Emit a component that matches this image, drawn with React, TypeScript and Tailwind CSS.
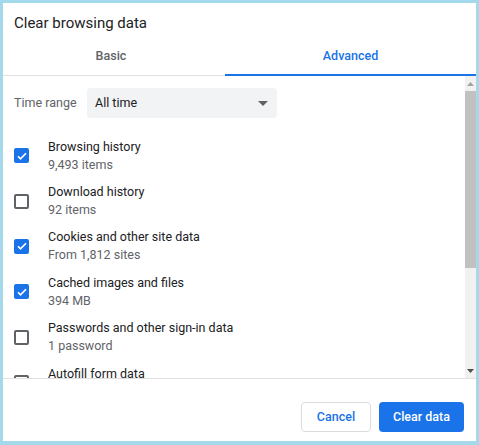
import React from "react";

const items = [
  { title: "Browsing history", sub: "9,493 items", checked: true },
  { title: "Download history", sub: "92 items", checked: false },
  { title: "Cookies and other site data", sub: "From 1,812 sites", checked: true },
  { title: "Cached images and files", sub: "394 MB", checked: true },
  { title: "Passwords and other sign-in data", sub: "1 password", checked: false },
  { title: "Autofill form data", sub: "", checked: false },
];

function Checkbox({ checked }: { checked: boolean }) {
  if (checked) {
    return (
      <div className="w-[15px] h-[15px] rounded-[2px] bg-[#1a73e8] flex items-center justify-center shrink-0">
        <svg width="12" height="12" viewBox="0 0 24 24">
          <path d="M4 12.5l5 5L20 6.5" fill="none" stroke="#fff" strokeWidth="3.4" />
        </svg>
      </div>
    );
  }
  return <div className="w-[15px] h-[15px] rounded-[2px] border-2 border-[#5f6368] shrink-0" />;
}

export default function App() {
  return (
    <div
      className="w-[479px] h-[445px] bg-[#a3d9ea] pt-[3px] pl-[3px] pr-[3px] pb-[4px]"
      style={{ fontFamily: "Roboto, 'Liberation Sans', sans-serif" }}
    >
      <div className="bg-white h-full flex flex-col">
        <div className="h-[35px] pt-[10px] pl-[11px] text-[15px] leading-[20px] text-[#202124]">
          Clear browsing data
        </div>
        <div className="flex h-[38px] border-b border-[#e0e0e0] text-[12.5px] font-medium">
          <div className="w-[222px] flex items-center justify-center text-[#5f6368] pr-[6px]">Basic</div>
          <div className="flex-1 flex items-center justify-center text-[#1a73e8] border-b-2 border-[#1a73e8] -mb-px">
            Advanced
          </div>
        </div>
        <div className="flex h-[303px] border-b border-[#e0e0e0]">
          <div className="flex-1 overflow-hidden pl-[11px]">
            <div className="flex items-center mt-[12px] h-[30px]">
              <span className="text-[12.5px] text-[#5f6368] w-[73px]">Time range</span>
              <div className="w-[190px] h-[30px] rounded-[4px] bg-[#f1f3f4] flex items-center justify-between pl-[8px] pr-[9px]">
                <span className="text-[12.5px] text-[#202124]">All time</span>
                <svg width="10" height="5" viewBox="0 0 10 5">
                  <path d="M0 0h10L5 5z" fill="#5f6368" />
                </svg>
              </div>
            </div>
            <div className="mt-[15px]">
              {items.map((item, index) => (
                <div className="flex items-center h-[45.4px]" key={index}>
                  <Checkbox checked={item.checked} />
                  <div className="ml-[19px] flex flex-col">
                    <span className="text-[12.5px] leading-[18px] text-[#202124]">{item.title}</span>
                    <span className="text-[12.5px] leading-[18px] text-[#5f6368]">{item.sub || "\u00a0"}</span>
                  </div>
                </div>
              ))}
            </div>
          </div>
          <div className="w-[11px] bg-[#f1f1f1] flex flex-col">
            <div className="h-[15px] flex items-center justify-center">
              <svg width="7" height="4" viewBox="0 0 7 4">
                <path d="M0 4h7L3.5 0z" fill="#a3a3a3" />
              </svg>
            </div>
            <div className="h-[177px] bg-[#c1c1c1]" />
            <div className="flex-1" />
            <div className="h-[15px] flex items-center justify-center">
              <svg width="7" height="4" viewBox="0 0 7 4">
                <path d="M0 0h7L3.5 4z" fill="#505050" />
              </svg>
            </div>
          </div>
        </div>
        <div className="flex justify-end gap-[8px] pt-[23px] pr-[12px]">
          <button className="h-[30px] w-[70px] rounded-[4px] border border-[#dadce0] bg-white text-[#1a73e8] text-[12.5px] font-medium">
            Cancel
          </button>
          <button className="h-[30px] w-[85px] rounded-[4px] bg-[#1a73e8] text-white text-[12.5px] font-medium">
            Clear data
          </button>
        </div>
      </div>
    </div>
  );
}
